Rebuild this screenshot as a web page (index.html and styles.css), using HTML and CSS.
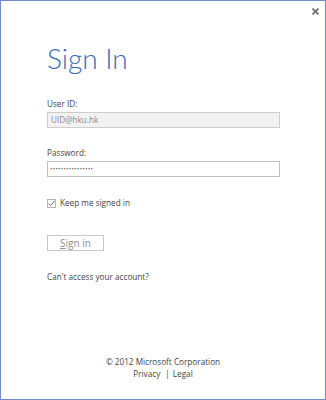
FILE: index.html
```html
<!DOCTYPE html>
<html lang="en">
<head>
<meta charset="utf-8">
<title>Sign In</title>
<link rel="stylesheet" href="styles.css">
</head>
<body>
<div class="window">
  <div class="titlebar">
    <span class="close" aria-label="Close">
      <svg width="7" height="7" viewBox="0 0 7 7"><path d="M0.5 0.5 L6.5 6.5 M6.5 0.5 L0.5 6.5" stroke="#6b6b6b" stroke-width="1.6" fill="none"/></svg>
    </span>
  </div>
  <main class="content">
    <h1 class="title">Sign In</h1>
    <div class="field-label">User ID:</div>
    <div class="input input-disabled">UID@hku.hk</div>
    <div class="field-label field-label-second">Password:</div>
    <div class="input input-password">••••••••••••••••</div>
    <div class="check-row">
      <span class="checkbox">
        <svg width="7" height="7" viewBox="0 0 7 7"><path d="M0.6 3.6 L2.6 5.6 L6.4 1" stroke="#6f6f6f" stroke-width="1" fill="none"/></svg>
      </span>
      <span class="check-label">Keep me signed in</span>
    </div>
    <div class="button"><span class="accel">S</span>ign in</div>
    <div class="link">Can't access your account?</div>
  </main>
  <footer class="footer">
    <div class="footer-line">© 2012 Microsoft Corporation</div>
    <div class="footer-line"><span class="privacy">Privacy</span><span class="sep">|</span><span>Legal</span></div>
  </footer>
</div>
</body>
</html>
```
FILE: styles.css
```css
* { box-sizing: border-box; }
html, body { margin: 0; padding: 0; background: #ffffff; }
body { font-family: "Open Sans", "Noto Sans", sans-serif; color: #444444; }

.window {
  width: 326px;
  height: 400px;
  border: 1px solid #6e8cc6;
  background: #ffffff;
  display: flex;
  flex-direction: column;
}

.titlebar {
  height: 21px;
  display: flex;
  justify-content: flex-end;
  align-items: flex-start;
  padding-right: 6px;
  padding-top: 7px;
}
.close { display: block; width: 7px; height: 7px; line-height: 0; }

.content {
  padding-left: 46px;
  display: flex;
  flex-direction: column;
  align-items: flex-start;
}

.title {
  margin: 19px 0 0 0;
  font-family: "Lato", "Open Sans", sans-serif;
  font-weight: 300;
  font-size: 28px;
  line-height: 34px;
  color: #3a6db3;
}

.field-label {
  margin-top: 23px;
  font-size: 8.2px;
  line-height: 12px;
  color: #444444;
}
.field-label-second { margin-top: 19px; }

.input {
  margin-top: 2px;
  width: 233px;
  height: 16px;
  border: 1px solid #c2c2c2;
  background: #ffffff;
  font-size: 8.2px;
  line-height: 14px;
  padding-left: 3px;
  color: #8a8a8a;
}
.input-disabled { background: #f2f2f2; border-color: #cdcdcd; }
.input-password { color: #555555; font-size: 6px; letter-spacing: 0.45px; padding-left: 2px; }

.check-row {
  margin-top: 20px;
  height: 12px;
  display: flex;
  align-items: center;
  gap: 4px;
}
.checkbox {
  width: 9px;
  height: 9px;
  border: 1px solid #b5b5b5;
  display: flex;
  align-items: center;
  justify-content: center;
  background: #ffffff;
}
.check-label { font-size: 8.2px; line-height: 12px; color: #444444; }

.button {
  margin-top: 26px;
  width: 57px;
  height: 16px;
  border: 1px solid #c9c9c9;
  background: #ffffff;
  font-size: 10px;
  line-height: 14px;
  text-align: center;
  color: #8f8f8f;
}
.accel { text-decoration: underline; }

.link {
  margin-top: 20px;
  font-size: 8.2px;
  line-height: 12px;
  color: #444444;
}

.footer {
  margin-top: auto;
  padding-bottom: 20px;
  text-align: center;
  font-size: 8.2px;
  line-height: 11.5px;
  color: #444444;
}
.sep { margin: 0 3px 0 5px; }
```
